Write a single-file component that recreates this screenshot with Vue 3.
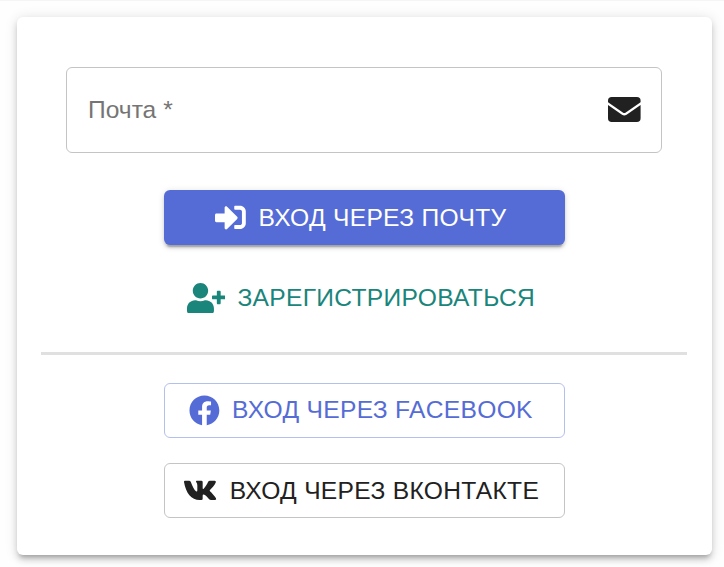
<script setup>
const envelope = {
  top: 'M3.8 0h25.4A3.8 3.8 0 0 1 33 3.8v.9a1 1 0 0 1-.4.8L18 15.6a2.6 2.6 0 0 1-3 0L.4 5.5A1 1 0 0 1 0 4.700V3.8A3.8 3.8 0 0 1 3.8 0z',
  body: 'M0 8.100l14.200 9.900a4 4 0 0 0 4.600 0L33 8.100v13.400a3.8 3.8 0 0 1-3.8 3.8H3.8A3.8 3.8 0 0 1 0 21.5z',
}

const actions = [
  {
    kind: 'primary',
    label: 'Вход через почту',
    box: '0 0 512 512',
    d: 'M416 448h-84c-6.6 0-12-5.4-12-12v-40c0-6.6 5.4-12 12-12h84c17.7 0 32-14.3 32-32V160c0-17.7-14.3-32-32-32h-84c-6.6 0-12-5.4-12-12V76c0-6.6 5.4-12 12-12h84c53 0 96 43 96 96v192c0 53-43 96-96 96zm-47-201L201 79c-15-15-41-4.5-41 17v96H24c-13.3 0-24 10.7-24 24v96c0 13.3 10.7 24 24 24h136v96c0 21.5 26 32 41 17l168-168c9.3-9.4 9.3-24.6 0-34z',
  },
  {
    kind: 'register',
    label: 'Зарегистрироваться',
    box: '0 0 640 512',
    d: 'M624 208h-64v-64c0-8.8-7.2-16-16-16h-32c-8.8 0-16 7.2-16 16v64h-64c-8.8 0-16 7.2-16 16v32c0 8.8 7.2 16 16 16h64v64c0 8.8 7.2 16 16 16h32c8.8 0 16-7.2 16-16v-64h64c8.8 0 16-7.2 16-16v-32c0-8.8-7.2-16-16-16zm-400 48c70.7 0 128-57.3 128-128S294.7 0 224 0 96 57.3 96 128s57.3 128 128 128zm89.6 32h-16.7c-22.2 10.2-46.9 16-72.9 16s-50.6-5.8-72.9-16h-16.7C60.2 288 0 348.2 0 422.4V464c0 26.5 21.5 48 48 48h352c26.5 0 48-21.5 48-48v-41.6c0-74.2-60.2-134.4-134.4-134.4z',
  },
]

const socials = [
  {
    kind: 'facebook',
    label: 'Вход через Facebook',
    box: '0 0 512 512',
    d: 'M504 256C504 119 393 8 256 8S8 119 8 256c0 123.78 90.69 226.38 209.25 245V327.69h-63V256h63v-54.64c0-62.15 37-96.48 93.67-96.48 27.14 0 55.52 4.84 55.52 4.84v61h-31.28c-30.8 0-40.41 19.12-40.41 38.73V256h68.78l-11 71.69h-57.78V501C413.31 480.38 504 379.78 504 256z',
  },
  {
    kind: 'vk',
    label: 'Вход через ВКонтакте',
    box: '-3 -17 104 92.4',
    d: 'M3 0H15Q19 0 20.500 4C25 17 31 28 36 32Q40 34 40 28V14Q40 8 36.500 4Q34.500 0 38.500 0H52Q56 0 56 4V22Q56 26 59 24C64 19 69 11 72.500 3.500Q74 0 78 0H92Q97 0 95.500 5C92 14 84 22 78 28Q76 30 78 32C84 38 92 46 96 53Q98.500 58 93 58H81Q78 58 75.500 55.500C69 48 64 43 59 41.500Q56 41 56 45V54Q56 58 52 58H47C22 58 6 38 0 4Q-.500 0 3 0z',
  },
]
</script>

<template>
  <main class="page">
    <section class="card">
      <label class="field">
        <span class="field-label">Почта *</span>
        <svg class="field-icon" viewBox="0 0 33 25.3">
          <path :d="envelope.top" />
          <path :d="envelope.body" />
        </svg>
      </label>
      <div class="group actions">
        <button v-for="b in actions" :key="b.kind" class="btn" :class="b.kind" type="button">
          <svg class="icon" :viewBox="b.box"><path :d="b.d" /></svg>
          <span class="text">{{ b.label }}</span>
        </button>
      </div>
      <hr class="divider" />
      <div class="group">
        <button v-for="b in socials" :key="b.kind" class="btn" :class="b.kind" type="button">
          <svg class="icon" :viewBox="b.box"><path :d="b.d" /></svg>
          <span class="text">{{ b.label }}</span>
        </button>
      </div>
    </section>
  </main>
</template>

<style>
body {
  background: #fefefe;
}
</style>

<style scoped>
.page {
  box-sizing: border-box;
  height: 567px;
  padding: 16px 12.5px 12px 16.5px;
  border-top: 1px solid #f5f5f5;
  overflow: hidden;
  font-family: "Liberation Sans", Arial, sans-serif;
}
.card {
  box-sizing: border-box;
  height: 538px;
  padding: 50px 24.5px 0 24.5px;
  border-radius: 6px;
  background: #fff;
  box-shadow: 0 4.6px 4.6px -3px rgba(0, 0, 0, 0.2), 0 4.6px 6.2px rgba(0, 0, 0, 0.14),
    0 1.5px 12.3px rgba(0, 0, 0, 0.12);
}
.field {
  box-sizing: border-box;
  display: flex;
  align-items: center;
  justify-content: space-between;
  height: 86px;
  margin: 0 25px;
  padding: 0 20.4px 0 21px;
  border: 1px solid #c4c4c4;
  border-radius: 6px;
}
.field-label {
  font-size: 24.6px;
  line-height: 28px;
  color: #757575;
}
.field-icon {
  width: 32.6px;
  height: 25px;
  margin-bottom: 1.4px;
  fill: #212121;
}
.group {
  display: flex;
  flex-direction: column;
  align-items: center;
  gap: 25px;
}
.actions {
  margin-top: 37px;
}
.btn {
  box-sizing: border-box;
  display: flex;
  align-items: center;
  justify-content: center;
  gap: 12.3px;
  width: 401px;
  height: 55.4px;
  padding: 0;
  border: 1px solid transparent;
  border-radius: 6px;
  background: none;
  font-family: inherit;
  font-size: 24.6px;
  letter-spacing: 0.3px;
  line-height: 28px;
  text-transform: uppercase;
  white-space: nowrap;
}
.icon {
  height: 30.8px;
  margin-left: -6.2px;
  fill: currentColor;
}
.primary {
  border: 0;
  background: #556cd6;
  color: #fff;
  box-shadow: 0 4.6px 1.5px -3px rgba(0, 0, 0, 0.2), 0 3px 3px rgba(0, 0, 0, 0.14),
    0 1.5px 7.7px rgba(0, 0, 0, 0.12);
}
.register {
  color: #19857b;
}
.facebook {
  border-color: #b5bfed;
  color: #556cd6;
}
.vk {
  border-color: #c4c4c4;
  color: #212121;
}
.divider {
  height: 3px;
  margin: 26.4px 0 27.4px;
  border: 0;
  background: #e0e0e0;
}
</style>
